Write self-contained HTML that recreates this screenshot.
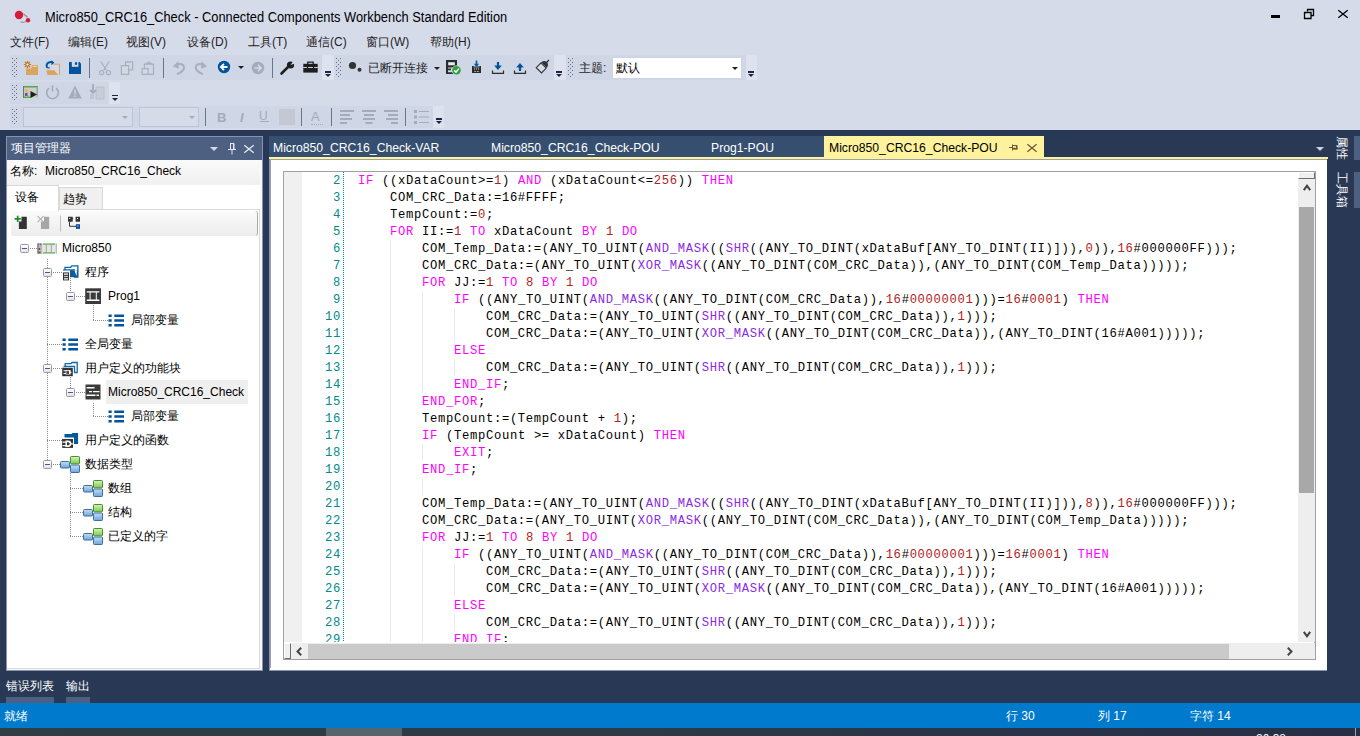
<!DOCTYPE html>
<html><head><meta charset="utf-8">
<style>
*{box-sizing:border-box;margin:0;padding:0}
html,body{width:1360px;height:736px;overflow:hidden;background:#293955;font-family:"Liberation Sans",sans-serif;font-size:12px;color:#1e1e1e}
.a{position:absolute}
.t{position:absolute;white-space:pre;line-height:1}
svg{position:absolute;overflow:visible}
#top{left:0;top:0;width:1360px;height:130px;background:#d6dbe9}
.tb{position:absolute;background:#cfd6e5}
.grip{position:absolute;width:6px}
.sep{position:absolute;width:1px;background:#6b7489}
.ovf{position:absolute;width:7px;height:8px}
.ovf:before{content:"";position:absolute;left:0;top:0;width:6px;height:1.5px;background:#1b2742}
.ovf:after{content:"";position:absolute;left:0;top:3px;border-left:3px solid transparent;border-right:3px solid transparent;border-top:3.5px solid #1b2742}
.dd{position:absolute;border-left:3px solid transparent;border-right:3px solid transparent;border-top:3px solid #1e1e1e;width:0;height:0}
.code{position:absolute;left:358px;top:172px;font-family:"Liberation Mono",monospace;font-size:12.2px;letter-spacing:0.68px;line-height:17px;white-space:pre;color:#000}
.k{color:#ff00ff}.f{color:#8a2be2}.n{color:#b22222}
.ln{position:absolute;left:300px;width:42px;top:172px;text-align:right;font-family:"Liberation Mono",monospace;font-size:12.2px;letter-spacing:0.68px;line-height:17px;color:#008b8b;white-space:pre}
.tree .t{font-size:12px;color:#000}
</style></head><body>
<div id="top" class="a"></div>
<!-- title -->
<svg style="left:12px;top:8px" width="20" height="16" viewBox="0 0 20 16">
<path d="M11.3 5.8L15.6 9.3" stroke="#8c9494" stroke-width="1.3"/><path d="M14.3 13.2Q12.5 15.2 8.6 13.9" fill="none" stroke="#9aa0a0" stroke-width="1.2"/>
<circle cx="7" cy="7" r="4.2" fill="#d7193a"/><circle cx="16" cy="12.2" r="2.2" fill="#d7193a"/></svg>
<div class="t" style="left:45px;top:10px;font-size:14px;color:#000;transform-origin:0 0;transform:scaleX(0.917)">Micro850_CRC16_Check - Connected Components Workbench Standard Edition</div>
<!-- window controls -->
<div class="a" style="left:1271px;top:15px;width:9px;height:3px;background:#000"></div>
<svg style="left:1303px;top:8px" width="12" height="12" viewBox="0 0 12 12" fill="none" stroke="#000" stroke-width="1.3"><path d="M4.5 3.5V1.5h6v6h-2.5"/><path d="M1.5 4.5h6.5v6H1.5z"/></svg>
<svg style="left:1338px;top:10px" width="10" height="8" viewBox="0 0 10 8"><path d="M0.3 0.2L9.7 7.8M9.7 0.2L0.3 7.8" stroke="#000" stroke-width="1.3"/></svg>
<!-- menu -->
<div class="t" style="left:10px;top:36px">文件(F)</div>
<div class="t" style="left:68px;top:36px">编辑(E)</div>
<div class="t" style="left:126px;top:36px">视图(V)</div>
<div class="t" style="left:187px;top:36px">设备(D)</div>
<div class="t" style="left:248px;top:36px">工具(T)</div>
<div class="t" style="left:306px;top:36px">通信(C)</div>
<div class="t" style="left:366px;top:36px">窗口(W)</div>
<div class="t" style="left:430px;top:36px">帮助(H)</div>

<!-- TOOLBARS -->
<div class="tb" style="left:10px;top:55px;width:312px;height:25px"></div>
<svg class="grip" style="left:10px;top:58px" width="8" height="20" fill="#5f6b85"><rect x="2" y="0" width="1" height="1"/><rect x="6" y="0" width="1" height="1"/><rect x="4" y="2" width="1" height="1"/><rect x="2" y="4" width="1" height="1"/><rect x="6" y="4" width="1" height="1"/><rect x="4" y="6" width="1" height="1"/><rect x="2" y="8" width="1" height="1"/><rect x="6" y="8" width="1" height="1"/><rect x="4" y="10" width="1" height="1"/><rect x="2" y="12" width="1" height="1"/><rect x="6" y="12" width="1" height="1"/><rect x="4" y="14" width="1" height="1"/><rect x="2" y="16" width="1" height="1"/><rect x="6" y="16" width="1" height="1"/><rect x="4" y="18" width="1" height="1"/></svg>
<!-- new project / open / save -->
<svg style="left:0;top:0" width="90" height="80" viewBox="0 0 90 80">
<g stroke="#c0761a" stroke-width="1.1" stroke-linecap="round">
<path d="M27.5 61.3v1.2M27.5 66.5v1.2M24.3 64.5h1.2M29.5 64.5h1.2M25.2 62.2l0.8 0.8M29 66l0.8 0.8M29.8 62.2l-0.8 0.8M26 66l-0.8 0.8"/></g>
<circle cx="27.5" cy="64.5" r="1.6" fill="#fff" stroke="#c0761a" stroke-width="1.1"/>
<path d="M26 68.4H31.3L32.1 65H38V75H26Z" fill="#d9a45c"/>
<path d="M32.6 66.3H37.2" stroke="#f3e6cf" stroke-width="0.9"/>
<path d="M50.5 64.2H59.5V75H50.5Z" fill="#d6dae4"/><path d="M53.5 64.2H59.5V75" fill="none" stroke="#d9a45c" stroke-width="1"/>
<path d="M46.2 70.3H54.2L58.3 75H47.6Z" fill="#d9a45c"/>
<path d="M47 67.8Q45.8 64 48.5 62.6Q50.5 61.6 52.5 62.4" fill="none" stroke="#00539c" stroke-width="1.9"/>
<path d="M51.6 60.2L54.4 62.8 51.4 65.2Z" fill="#00539c"/>
<path d="M47 67.5Q48 68.2 49.5 67.6" fill="none" stroke="#00539c" stroke-width="1.3"/>
<path d="M69 62H79.6L81 63.4V74H69Z" fill="#00539c"/>
<path d="M71.8 62H78.4V66.8H71.8Z" fill="#d8dce8"/>
<path d="M74.9 62.2H77.1V64.8H74.9Z" fill="#00539c"/>
</svg>
<div class="sep" style="left:89px;top:58px;height:20px"></div>
<!-- cut/copy/paste/undo/redo -->
<svg style="left:0;top:0" width="215" height="80" viewBox="0 0 215 80">
<g fill="none" stroke="#a9afbb" stroke-width="1.2">
<path d="M101 61.5L106.3 70.2M109 61.5L103.7 70.2"/><circle cx="101.6" cy="72.6" r="2.1"/><circle cx="108.4" cy="72.6" r="2.1"/>
<path d="M125.6 65.2V61.8H132.6V69.8H129.2"/>
<path d="M121.4 65.6H128.6V74.4H121.4Z" fill="#d3d8e3"/>
<path d="M146.5 64.6V63.6H151.2V64.6M144.4 68.2V64.2H153.5V74.4H148.3" />
<path d="M146.8 63.4Q148.9 60.6 151 63.4"/>
<path d="M142.1 68.6H148.1V74.4H142.1Z" fill="#d3d8e3"/>
</g>
<path d="M175.5 65.2Q183.5 62 184 67.5Q184.3 71 177 74.2" fill="none" stroke="#a9afbb" stroke-width="2"/>
<path d="M172.8 66.5L178.2 61.3 178.8 68.8Z" fill="#a9afbb"/>
<path d="M204.3 65.2Q196.3 62 195.8 67.5Q195.5 71 202.8 74.2" fill="none" stroke="#a9afbb" stroke-width="2"/>
<path d="M207 66.5L201.6 61.3 201 68.8Z" fill="#a9afbb"/>
</svg>
<div class="sep" style="left:163px;top:58px;height:20px"></div>
<!-- back -->
<svg style="left:217px;top:60px" width="14" height="14" viewBox="0 0 14 14">
<circle cx="7" cy="7" r="6.2" fill="#00539c"/><path d="M3.5 7h7M7 3.8L3.8 7 7 10.2" fill="none" stroke="#fff" stroke-width="1.8"/></svg>
<div class="dd" style="left:238px;top:66px"></div>
<!-- fwd -->
<svg style="left:251px;top:61px" width="14" height="14" viewBox="0 0 14 14">
<circle cx="7" cy="7" r="6.2" fill="#a5abb8"/><path d="M3.5 7h7M7 3.8L10.2 7 7 10.2" fill="none" stroke="#d6dbe9" stroke-width="1.6"/></svg>
<div class="sep" style="left:272px;top:58px;height:20px"></div>
<!-- wrench -->
<svg style="left:280px;top:61px" width="15" height="14" viewBox="0 0 15 14">
<path d="M1.5 12.5L8 6" stroke="#1e1e1e" stroke-width="2.6" stroke-linecap="round"/><circle cx="10.5" cy="4" r="3.6" fill="#1e1e1e"/><path d="M10.5 4L13 0.5 15 2.5z" fill="#cfd6e5"/></svg>
<!-- toolbox -->
<svg style="left:303px;top:61px" width="15" height="12" viewBox="0 0 15 12">
<path d="M4.8 3V1.2h5.4V3" fill="none" stroke="#1e1e1e" stroke-width="1.3"/><path d="M0.3 2.8h14.4v8.8H0.3z" fill="#1e1e1e"/><path d="M0.3 6h14.4v1H0.3z" fill="#cfd6e5"/><path d="M3.8 5h1.4v2.8H3.8zM9.8 5h1.4v2.8H9.8z" fill="#1e1e1e"/></svg>
<div class="a" style="left:322px;top:55px;width:12px;height:25px;background:#dde2ee"></div>
<div class="ovf" style="left:325px;top:71px"></div>

<div class="tb" style="left:334px;top:55px;width:220px;height:25px"></div>
<svg class="grip" style="left:334px;top:58px" width="8" height="20" fill="#5f6b85"><rect x="2" y="0" width="1" height="1"/><rect x="6" y="0" width="1" height="1"/><rect x="4" y="2" width="1" height="1"/><rect x="2" y="4" width="1" height="1"/><rect x="6" y="4" width="1" height="1"/><rect x="4" y="6" width="1" height="1"/><rect x="2" y="8" width="1" height="1"/><rect x="6" y="8" width="1" height="1"/><rect x="4" y="10" width="1" height="1"/><rect x="2" y="12" width="1" height="1"/><rect x="6" y="12" width="1" height="1"/><rect x="4" y="14" width="1" height="1"/><rect x="2" y="16" width="1" height="1"/><rect x="6" y="16" width="1" height="1"/><rect x="4" y="18" width="1" height="1"/></svg>
<svg style="left:348px;top:61px" width="16" height="14" viewBox="0 0 16 14"><circle cx="4.5" cy="4.5" r="3.6" fill="#333"/><circle cx="11.5" cy="8.8" r="2" fill="#333"/></svg>
<div class="t" style="left:368px;top:62px">已断开连接</div>
<div class="dd" style="left:434px;top:67px"></div>
<!-- check/download/upload/brush icons -->
<svg style="left:0;top:0" width="560" height="80" viewBox="0 0 560 80">
<path d="M446 60H457V67.5H448V74H446Z" fill="#2b2b2b"/>
<path d="M448.2 62.2H454.8V65.3H448.2Z" fill="#e8ebf2"/>
<path d="M446 68.6H451V70.2H446ZM446 72.3H453V74H446Z" fill="#2b2b2b"/>
<circle cx="456.5" cy="70.3" r="4.6" fill="#2e9e3e" stroke="#dfe9df" stroke-width="0.6"/>
<path d="M454.2 70.4L456 72.2 458.9 68.6" fill="none" stroke="#fff" stroke-width="1.5"/>
<path d="M472 66H481V73H472Z" fill="#2b2b2b"/>
<path d="M473.5 66.5H479.5V67.3H473.5Z" fill="#cfd6e5"/>
<path d="M474 68.5h1v1h-1zM476 68.5h1v1h-1zM478 68.5h1v1h-1zM474.5 71h1.2v1h-1.2zM477.3 71h1.2v1h-1.2z" fill="#e6e9f0"/>
<path d="M476.5 60.5V66" stroke="#00609c" stroke-width="1.6"/>
<path d="M473.8 63.8L476.5 67 479.2 63.8Z" fill="#00609c"/>
<path d="M498 62V68.5" stroke="#00539c" stroke-width="2.2"/>
<path d="M494.2 65.5L498 70 501.8 65.5Z" fill="#00539c"/>
<path d="M492.5 70.5V73.3H503.5V70.5" fill="none" stroke="#2b2b2b" stroke-width="1.2"/>
<path d="M520 71V65.5" stroke="#00539c" stroke-width="2.2"/>
<path d="M516.2 67.5L520 63 523.8 67.5Z" fill="#00539c"/>
<path d="M514.5 70.5V73.3H525.5V70.5" fill="none" stroke="#2b2b2b" stroke-width="1.2"/>
<path d="M545.5 63.5L549 60" stroke="#333" stroke-width="1.2"/>
<path d="M541.2 62.3Q544.5 59.8 546.8 62.1Q549.2 64.6 546.8 67.8Z" fill="#333"/>
<path d="M541 62.8L546.3 68.1 541.5 73 536.2 67.7Z" fill="#d6dbe9" stroke="#333" stroke-width="1.1"/>
</svg>
<div class="a" style="left:554px;top:55px;width:12px;height:25px;background:#dde2ee"></div>
<div class="ovf" style="left:556px;top:71px"></div>

<div class="tb" style="left:566px;top:55px;width:180px;height:25px"></div>
<svg class="grip" style="left:566px;top:58px" width="8" height="20" fill="#5f6b85"><rect x="2" y="0" width="1" height="1"/><rect x="6" y="0" width="1" height="1"/><rect x="4" y="2" width="1" height="1"/><rect x="2" y="4" width="1" height="1"/><rect x="6" y="4" width="1" height="1"/><rect x="4" y="6" width="1" height="1"/><rect x="2" y="8" width="1" height="1"/><rect x="6" y="8" width="1" height="1"/><rect x="4" y="10" width="1" height="1"/><rect x="2" y="12" width="1" height="1"/><rect x="6" y="12" width="1" height="1"/><rect x="4" y="14" width="1" height="1"/><rect x="2" y="16" width="1" height="1"/><rect x="6" y="16" width="1" height="1"/><rect x="4" y="18" width="1" height="1"/></svg>
<div class="t" style="left:579px;top:62px">主题:</div>
<div class="a" style="left:612px;top:57px;width:130px;height:22px;background:#fff;border:1px solid #ccd3e3"></div>
<div class="t" style="left:616px;top:62px;color:#000">默认</div>
<div class="dd" style="left:732px;top:67px"></div>
<div class="a" style="left:746px;top:55px;width:11px;height:25px;background:#dde2ee"></div>
<div class="ovf" style="left:748px;top:71px"></div>

<!-- row 2 -->
<div class="tb" style="left:10px;top:82px;width:99px;height:22px"></div>
<div class="a" style="left:109px;top:82px;width:11px;height:22px;background:#dde2ee"></div>
<svg class="grip" style="left:10px;top:85px" width="8" height="16" fill="#5f6b85"><rect x="2" y="0" width="1" height="1"/><rect x="6" y="0" width="1" height="1"/><rect x="4" y="2" width="1" height="1"/><rect x="2" y="4" width="1" height="1"/><rect x="6" y="4" width="1" height="1"/><rect x="4" y="6" width="1" height="1"/><rect x="2" y="8" width="1" height="1"/><rect x="6" y="8" width="1" height="1"/><rect x="4" y="10" width="1" height="1"/><rect x="2" y="12" width="1" height="1"/><rect x="6" y="12" width="1" height="1"/><rect x="4" y="14" width="1" height="1"/></svg>
<svg style="left:23px;top:86px" width="15" height="12" viewBox="0 0 15 12"><path d="M0 0h15v12H0z" fill="#c9d0c8"/><path d="M0 0h15v1.5H0zM0 10.5h8v1.5H0z" fill="#5aa54a"/><path d="M0 0h1v12H0z" fill="#6a7a6a"/><path d="M1.5 3h4v7h-4z" fill="#e8b48a"/><path d="M2 7h2.5v3H2z" fill="#2f6fb0"/><path d="M13.5 1.5h1.5v9h-1.5z" fill="#9aa59a"/><path d="M7.5 5L14 8.5 7.5 12z" fill="#1e1e1e"/></svg>
<svg style="left:45px;top:85px" width="15" height="15" viewBox="0 0 15 15" fill="none" stroke="#a5abb8" stroke-width="1.6">
<path d="M4 3.2A5.8 5.8 0 1 0 11 3.2"/><path d="M7.5 0.5v6"/></svg>
<svg style="left:68px;top:85px" width="14" height="14" viewBox="0 0 14 14">
<path d="M7 0.5L13.8 13.5H0.2z" fill="#a5abb8"/><path d="M6.3 4.5h1.4v5H6.3zM6.3 10.5h1.4v1.5H6.3z" fill="#cfd6e5"/></svg>
<svg style="left:89px;top:84px" width="16" height="16" viewBox="0 0 16 16">
<path d="M7 3h8v12H7z" fill="#c9ced8" stroke="#b8bdc9" stroke-width="0.8"/><path d="M4 0v9M1 6l3 3 3-3" fill="none" stroke="#a5abb8" stroke-width="1.8"/><path d="M1 10h4v5H1z" fill="#c0c5d0"/></svg>
<div class="ovf" style="left:112px;top:94.5px"></div>

<!-- row 3 -->
<div class="tb" style="left:10px;top:106px;width:423px;height:22px"></div>
<div class="a" style="left:433px;top:106px;width:11px;height:22px;background:#dde2ee"></div>
<svg class="grip" style="left:10px;top:109px" width="8" height="16" fill="#5f6b85"><rect x="2" y="0" width="1" height="1"/><rect x="6" y="0" width="1" height="1"/><rect x="4" y="2" width="1" height="1"/><rect x="2" y="4" width="1" height="1"/><rect x="6" y="4" width="1" height="1"/><rect x="4" y="6" width="1" height="1"/><rect x="2" y="8" width="1" height="1"/><rect x="6" y="8" width="1" height="1"/><rect x="4" y="10" width="1" height="1"/><rect x="2" y="12" width="1" height="1"/><rect x="6" y="12" width="1" height="1"/><rect x="4" y="14" width="1" height="1"/></svg>
<div class="a" style="left:23px;top:107px;width:110px;height:20px;border:1px solid #bcc5d8;background:#d6dbe9"></div>
<div class="dd" style="left:122px;top:116px;border-top-color:#a5abb8"></div>
<div class="a" style="left:139px;top:107px;width:60px;height:20px;border:1px solid #bcc5d8;background:#d6dbe9"></div>
<div class="dd" style="left:189px;top:116px;border-top-color:#a5abb8"></div>
<div class="sep" style="left:205px;top:108px;height:18px"></div>
<div class="t" style="left:217px;top:111px;font-weight:bold;font-size:13px;color:#a5abb8">B</div>
<div class="t" style="left:240px;top:111px;font-style:italic;font-weight:bold;font-size:13px;color:#a5abb8">I</div>
<div class="t" style="left:259px;top:110px;font-size:12px;color:#a5abb8">U</div>
<div class="a" style="left:260px;top:121px;width:9px;height:1px;background:#a5abb8"></div>
<div class="a" style="left:279px;top:109px;width:16px;height:16px;background:#c3c8d3"></div>
<div class="sep" style="left:301px;top:108px;height:18px"></div>
<div class="t" style="left:311px;top:110px;font-size:13px;color:#a5abb8">A</div>
<div class="a" style="left:311px;top:124px;width:12px;height:1px;border-top:1px dotted #a5abb8"></div>
<div class="sep" style="left:331px;top:108px;height:18px"></div>
<svg style="left:340px;top:110px" width="15" height="14" viewBox="0 0 15 14" fill="#a5abb8"><path d="M0 0h14v2H0zM0 4h10v2H0zM0 8h12v2H0zM0 12h7v2H0z"/></svg>
<svg style="left:362px;top:110px" width="15" height="14" viewBox="0 0 15 14" fill="#a5abb8"><path d="M0 0h14v2H0zM2 4h10v2H2zM1 8h12v2H1zM3.5 12h7v2h-7z"/></svg>
<svg style="left:384px;top:110px" width="15" height="14" viewBox="0 0 15 14" fill="#a5abb8"><path d="M0 0h14v2H0zM4 4h10v2H4zM2 8h12v2H2zM7 12h7v2H7z"/></svg>
<div class="sep" style="left:405px;top:108px;height:18px"></div>
<svg style="left:414px;top:110px" width="15" height="14" viewBox="0 0 15 14" fill="#a5abb8"><path d="M0 0h3v3H0zM0 5.5h3v3H0zM0 11h3v3H0zM5 1h10v1H5zM5 6.5h10v1H5zM5 12h10v1H5z"/></svg>
<div class="ovf" style="left:436px;top:118px"></div>


<!-- LEFT PANEL -->
<div class="a" style="left:6px;top:136px;width:257px;height:535px;background:#fff;border:1px solid #8592b5"></div>
<div class="a" style="left:7px;top:137px;width:255px;height:23px;background:#4d6082"></div>
<div class="t" style="left:11px;top:142px;color:#fff">项目管理器</div>
<div class="dd" style="left:210px;top:147px;border-width:4px 4px 0 4px;border-top-color:#d5dae5"></div>
<svg style="left:228px;top:143px" width="8" height="12" viewBox="0 0 8 12" fill="none" stroke="#e6e9f0" stroke-width="1"><path d="M2 0.5h4v5.5M2.5 0.5v5.5M5.5 0.5v5.5M0 6.5h8M4 6.5v5"/></svg>
<svg style="left:244px;top:145px" width="10" height="8" viewBox="0 0 10 8"><path d="M0.3 0.2L9.7 7.8M9.7 0.2L0.3 7.8" stroke="#e6e9f0" stroke-width="1.3"/></svg>
<!-- name row -->
<div class="a" style="left:7px;top:160px;width:255px;height:25px;background:linear-gradient(#fafafa,#f0f0f0)"></div>
<div class="t" style="left:10px;top:165px;color:#000">名称:</div>
<div class="t" style="left:45px;top:165px;color:#000">Micro850_CRC16_Check</div>
<!-- tabs -->
<div class="a" style="left:7px;top:209px;width:253px;height:460px;border:1px solid #d9d9d9;border-left:none"></div>
<div class="a" style="left:260px;top:160px;width:2px;height:510px;background:#f8f8f5"></div>
<div class="a" style="left:7px;top:669px;width:255px;height:1px;background:#f8f8f5"></div>
<div class="a" style="left:59px;top:187px;width:44px;height:23px;background:#f0f0f0;border:1px solid #d9d9d9"></div>
<div class="a" style="left:7px;top:185px;width:52px;height:26px;background:#fff;border-top:1px solid #d9d9d9;border-right:1px solid #d9d9d9"></div>
<div class="t" style="left:15px;top:191px;color:#000">设备</div>
<div class="t" style="left:63px;top:193px;color:#000">趋势</div>

<!-- panel toolbar -->
<div class="a" style="left:11px;top:211px;width:247px;height:25px;background:linear-gradient(#fbfbfb,#ececec);border-radius:3px;border-right:1px solid #a8a8a8"></div>
<svg style="left:0;top:200px" width="90" height="40" viewBox="0 200 90 40">
<path d="M21.5 216.8H26.8V228.9H18.9V221.5H21.5Z" fill="#333"/>
<path d="M17.7 215.8V222M14.6 218.9H20.8" stroke="#1f8a1f" stroke-width="1.7"/>
<path d="M44 216.8H49.2V228.9H40.9V221.5H44Z" fill="#a6a6a6"/>
<path d="M37.6 216.2L43.6 222.2M43.6 216.2L37.6 222.2" stroke="#b0b0b0" stroke-width="1.2"/>
<path d="M60 215.5h1v16h-1z" fill="#bdbdbd"/>
<path d="M68 216.8H72.7V221.8H68ZM75.6 216.8H80V221.8H75.6Z" fill="#333"/>
<path d="M69.2 218h1v1h-1zM77 218h1v1h-1z" fill="#fff"/>
<path d="M71 218.6h2.2" stroke="#333" stroke-width="1"/>
<path d="M69.5 221.8V226.3H76" fill="none" stroke="#333" stroke-width="1"/>
<path d="M75.9 224.2H80V228.9H75.9Z" fill="#0b4ea2"/>
<path d="M77.4 225.4h1v1h-1z" fill="#fff"/>
</svg>

<div id="tree"><div class="a" style="left:106px;top:380px;width:142px;height:24px;background:#efefef"></div>
<div class="a" style="left:47.0px;top:259px;width:1px;height:205px;background-image:linear-gradient(#8a8a8a 50%,transparent 50%);background-size:1px 2px"></div>
<div class="a" style="left:70.0px;top:278px;width:1px;height:18px;background-image:linear-gradient(#8a8a8a 50%,transparent 50%);background-size:1px 2px"></div>
<div class="a" style="left:93.0px;top:305px;width:1px;height:15px;background-image:linear-gradient(#8a8a8a 50%,transparent 50%);background-size:1px 2px"></div>
<div class="a" style="left:70.0px;top:377px;width:1px;height:15px;background-image:linear-gradient(#8a8a8a 50%,transparent 50%);background-size:1px 2px"></div>
<div class="a" style="left:93.0px;top:403px;width:1px;height:13px;background-image:linear-gradient(#8a8a8a 50%,transparent 50%);background-size:1px 2px"></div>
<div class="a" style="left:70.0px;top:473px;width:1px;height:63px;background-image:linear-gradient(#8a8a8a 50%,transparent 50%);background-size:1px 2px"></div>
<div class="a" style="left:20.0px;top:243.5px;width:9px;height:9px;border:1px solid #9a9a9a;border-radius:1.5px;background:linear-gradient(#fff,#e4e4e4)"></div>
<div class="a" style="left:22.0px;top:247.5px;width:5px;height:1px;background:#3c5aa6"></div>
<div class="a" style="left:30px;top:248px;width:7px;height:1px;background-image:linear-gradient(90deg,#8a8a8a 50%,transparent 50%);background-size:2px 1px"></div>
<svg style="left:37px;top:243px" width="20" height="11" viewBox="0 0 20 11"><path d="M0 0.2h20v10.6H0z" fill="#e6e6e6"/><path d="M0 0.2h5.2v10.6H0z" fill="#bdbdbd"/><path d="M0.3 0.5h1.6v10H0.3z" fill="#8a8a8a"/><circle cx="1.8" cy="1.3" r="0.8" fill="#3a8ad6"/><circle cx="3.6" cy="1.3" r="0.8" fill="#1e6fc0"/><circle cx="3.6" cy="3" r="0.8" fill="#f0922e"/><circle cx="3.6" cy="6" r="0.8" fill="#f0922e"/><circle cx="2.4" cy="6" r="0.7" fill="#222"/><path d="M1.2 8.5h2.5v2H1.2z" fill="#666"/><path d="M6 0.6h12v1.2H6zM6 9.2h12v1.2H6z" fill="#5fb84a"/><path d="M9.3 1.5v8M14.3 1.5v8" stroke="#9a9a9a" stroke-width="0.9"/><path d="M18.8 0.5h0.9v10h-0.9z" fill="#a8a8a8"/></svg>
<div class="t" style="left:62px;top:241.5px;color:#000">Micro850</div>
<div class="a" style="left:43.0px;top:267.5px;width:9px;height:9px;border:1px solid #9a9a9a;border-radius:1.5px;background:linear-gradient(#fff,#e4e4e4)"></div>
<div class="a" style="left:45.0px;top:271.5px;width:5px;height:1px;background:#3c5aa6"></div>
<div class="a" style="left:53px;top:272px;width:9px;height:1px;background-image:linear-gradient(90deg,#8a8a8a 50%,transparent 50%);background-size:2px 1px"></div>
<svg style="left:62px;top:264px" width="17" height="17" viewBox="0 0 17 17"><path d="M1.1 5.8H12.4V13.2H15.9V1.9H9.7L8.7 3.3H3V5.8" fill="#fff" stroke="#0e64a6" stroke-width="1.3"/><path d="M8 6.2H15.9V13.2H8Z" fill="#0e5c9e"/><path d="M12.4 6.3L14.6 12L15 6.3Z" fill="#fff"/><path d="M1 8.4H7V16.4H1Z" fill="#333"/><path d="M2 9.5H6V10.7H2ZM2 14.3H6V15.5H2Z" fill="#fff"/><path d="M2 11.9H6V13.1H2Z" fill="#c4c4c4"/></svg>
<div class="t" style="left:85px;top:265.5px;color:#000">程序</div>
<div class="a" style="left:66.0px;top:291.5px;width:9px;height:9px;border:1px solid #9a9a9a;border-radius:1.5px;background:linear-gradient(#fff,#e4e4e4)"></div>
<div class="a" style="left:68.0px;top:295.5px;width:5px;height:1px;background:#3c5aa6"></div>
<div class="a" style="left:76px;top:296px;width:9px;height:1px;background-image:linear-gradient(90deg,#8a8a8a 50%,transparent 50%);background-size:2px 1px"></div>
<svg style="left:85px;top:288px" width="16" height="16" viewBox="0 0 16 16"><path d="M0.2 0.3h15.8v15.7H0.2z" fill="#3a3a3a"/><path d="M1.8 3.2h12.6v1.3H1.8zM1.8 11.6h12.6v1.3H1.8z" fill="#fff"/><path d="M4.6 4h1v8H4.6zM10.8 4h1v8h-1z" fill="#fff"/></svg>
<div class="t" style="left:108px;top:289.5px;color:#000">Prog1</div>
<div class="a" style="left:93px;top:320px;width:15px;height:1px;background-image:linear-gradient(90deg,#8a8a8a 50%,transparent 50%);background-size:2px 1px"></div>
<svg style="left:108px;top:313px" width="16" height="15" viewBox="0 0 16 15"><path d="M0.5 1.5h3.2v2.6H0.5zM0.5 6.2h3.2v2.6H0.5zM0.5 10.9h3.2v2.6H0.5zM6.3 1.5H16v2.6H6.3zM6.3 6.2H16v2.6H6.3zM6.3 10.9H16v2.6H6.3z" fill="#00539c"/></svg>
<div class="t" style="left:131px;top:313.5px;color:#000">局部变量</div>
<div class="a" style="left:47px;top:344px;width:15px;height:1px;background-image:linear-gradient(90deg,#8a8a8a 50%,transparent 50%);background-size:2px 1px"></div>
<svg style="left:62px;top:337px" width="16" height="15" viewBox="0 0 16 15"><path d="M0.5 1.5h3.2v2.6H0.5zM0.5 6.2h3.2v2.6H0.5zM0.5 10.9h3.2v2.6H0.5zM6.3 1.5H16v2.6H6.3zM6.3 6.2H16v2.6H6.3zM6.3 10.9H16v2.6H6.3z" fill="#00539c"/></svg>
<div class="t" style="left:85px;top:337.5px;color:#000">全局变量</div>
<div class="a" style="left:43.0px;top:363.5px;width:9px;height:9px;border:1px solid #9a9a9a;border-radius:1.5px;background:linear-gradient(#fff,#e4e4e4)"></div>
<div class="a" style="left:45.0px;top:367.5px;width:5px;height:1px;background:#3c5aa6"></div>
<div class="a" style="left:53px;top:368px;width:9px;height:1px;background-image:linear-gradient(90deg,#8a8a8a 50%,transparent 50%);background-size:2px 1px"></div>
<svg style="left:62px;top:360px" width="17" height="17" viewBox="0 0 17 17"><path d="M1.5 6.3H12.5V12.5H15.2V2.5H10L9 3.7H3.2V6.3" fill="#fff" stroke="#0e6aa8" stroke-width="1.3"/><path d="M0.2 7.7H10.8V16.2H0.2Z" fill="#333"/><path d="M3.7 9.9H8.6V14.5H3.7ZM1.5 10.3H3.7V11.3H1.5ZM1.5 13H3.7V14H1.5ZM8.6 11.8H9.6V12.8H8.6Z" fill="#fff"/><path d="M4.4 10.8H6.9V14H4.4Z" fill="#333"/><path d="M5.6 11v3" stroke="#777" stroke-width="0.5"/></svg>
<div class="t" style="left:85px;top:361.5px;color:#000">用户定义的功能块</div>
<div class="a" style="left:66.0px;top:387.5px;width:9px;height:9px;border:1px solid #9a9a9a;border-radius:1.5px;background:linear-gradient(#fff,#e4e4e4)"></div>
<div class="a" style="left:68.0px;top:391.5px;width:5px;height:1px;background:#3c5aa6"></div>
<div class="a" style="left:76px;top:392px;width:9px;height:1px;background-image:linear-gradient(90deg,#8a8a8a 50%,transparent 50%);background-size:2px 1px"></div>
<svg style="left:85px;top:384px" width="16" height="16" viewBox="0 0 16 16"><path d="M0.5 0.5h15v15h-15z" fill="#3a3a3a"/><path d="M1.5 3h8v1.4h-8zM4 7h3v1.2H4zM8 7h6.5v1.2H8zM1.5 10.6h9v1.4h-9zM11.5 10.6h2.5v1.4h-2.5z" fill="#fff"/></svg>
<div class="t" style="left:108px;top:385.5px;color:#000">Micro850_CRC16_Check</div>
<div class="a" style="left:93px;top:416px;width:15px;height:1px;background-image:linear-gradient(90deg,#8a8a8a 50%,transparent 50%);background-size:2px 1px"></div>
<svg style="left:108px;top:409px" width="16" height="15" viewBox="0 0 16 15"><path d="M0.5 1.5h3.2v2.6H0.5zM0.5 6.2h3.2v2.6H0.5zM0.5 10.9h3.2v2.6H0.5zM6.3 1.5H16v2.6H6.3zM6.3 6.2H16v2.6H6.3zM6.3 10.9H16v2.6H6.3z" fill="#00539c"/></svg>
<div class="t" style="left:131px;top:409.5px;color:#000">局部变量</div>
<div class="a" style="left:47px;top:440px;width:15px;height:1px;background-image:linear-gradient(90deg,#8a8a8a 50%,transparent 50%);background-size:2px 1px"></div>
<svg style="left:62px;top:432px" width="17" height="16" viewBox="0 0 17 16"><path d="M2.5 2H9.6L10.5 1H16.1V11.9H12V5.6H2.5Z" fill="#00599c"/><path d="M0.1 7H11V15.9H0.1Z" fill="#333"/><path d="M0.5 9.6H3.5V10.8H0.5ZM0.5 13H3.5V14.2H0.5ZM3.5 8.6H6.3Q9.3 8.6 9.3 11.8Q9.3 14.9 6.3 14.9H3.5ZM9.2 11.2H10.9V12.4H9.2Z" fill="#fff"/><path d="M5 10.2H6.2Q7.7 10.2 7.7 11.8Q7.7 13.3 6.2 13.3H5Z" fill="#333"/></svg>
<div class="t" style="left:85px;top:433.5px;color:#000">用户定义的函数</div>
<div class="a" style="left:43.0px;top:459.5px;width:9px;height:9px;border:1px solid #9a9a9a;border-radius:1.5px;background:linear-gradient(#fff,#e4e4e4)"></div>
<div class="a" style="left:45.0px;top:463.5px;width:5px;height:1px;background:#3c5aa6"></div>
<div class="a" style="left:53px;top:464px;width:7px;height:1px;background-image:linear-gradient(90deg,#8a8a8a 50%,transparent 50%);background-size:2px 1px"></div>
<svg style="left:60px;top:456px" width="20" height="17" viewBox="0 0 20 17"><defs><linearGradient id="gb" x1="0" y1="0" x2="0" y2="1"><stop offset="0" stop-color="#c4def4"/><stop offset="1" stop-color="#6ea6d6"/></linearGradient><linearGradient id="gg" x1="0" y1="0" x2="0" y2="1"><stop offset="0" stop-color="#d6f5b8"/><stop offset="1" stop-color="#7cc854"/></linearGradient></defs><rect x="0.5" y="5.5" width="9" height="6.5" rx="1" fill="url(#gb)" stroke="#3f6f9a"/><rect x="10.5" y="0.5" width="9" height="7.3" rx="0.8" fill="url(#gg)" stroke="#4d8c2c"/><rect x="10.5" y="9" width="9" height="7.5" rx="0.8" fill="url(#gb)" stroke="#3f6f9a"/></svg>
<div class="t" style="left:85px;top:457.5px;color:#000">数据类型</div>
<div class="a" style="left:70px;top:488px;width:13px;height:1px;background-image:linear-gradient(90deg,#8a8a8a 50%,transparent 50%);background-size:2px 1px"></div>
<svg style="left:83px;top:480px" width="20" height="17" viewBox="0 0 20 17"><defs><linearGradient id="gb" x1="0" y1="0" x2="0" y2="1"><stop offset="0" stop-color="#c4def4"/><stop offset="1" stop-color="#6ea6d6"/></linearGradient><linearGradient id="gg" x1="0" y1="0" x2="0" y2="1"><stop offset="0" stop-color="#d6f5b8"/><stop offset="1" stop-color="#7cc854"/></linearGradient></defs><rect x="0.5" y="5.5" width="9" height="6.5" rx="1" fill="url(#gb)" stroke="#3f6f9a"/><rect x="10.5" y="0.5" width="9" height="7.3" rx="0.8" fill="url(#gg)" stroke="#4d8c2c"/><rect x="10.5" y="9" width="9" height="7.5" rx="0.8" fill="url(#gb)" stroke="#3f6f9a"/></svg>
<div class="t" style="left:108px;top:481.5px;color:#000">数组</div>
<div class="a" style="left:70px;top:512px;width:13px;height:1px;background-image:linear-gradient(90deg,#8a8a8a 50%,transparent 50%);background-size:2px 1px"></div>
<svg style="left:83px;top:504px" width="20" height="17" viewBox="0 0 20 17"><defs><linearGradient id="gb" x1="0" y1="0" x2="0" y2="1"><stop offset="0" stop-color="#c4def4"/><stop offset="1" stop-color="#6ea6d6"/></linearGradient><linearGradient id="gg" x1="0" y1="0" x2="0" y2="1"><stop offset="0" stop-color="#d6f5b8"/><stop offset="1" stop-color="#7cc854"/></linearGradient></defs><rect x="0.5" y="5.5" width="9" height="6.5" rx="1" fill="url(#gb)" stroke="#3f6f9a"/><rect x="10.5" y="0.5" width="9" height="7.3" rx="0.8" fill="url(#gg)" stroke="#4d8c2c"/><rect x="10.5" y="9" width="9" height="7.5" rx="0.8" fill="url(#gb)" stroke="#3f6f9a"/></svg>
<div class="t" style="left:108px;top:505.5px;color:#000">结构</div>
<div class="a" style="left:70px;top:536px;width:13px;height:1px;background-image:linear-gradient(90deg,#8a8a8a 50%,transparent 50%);background-size:2px 1px"></div>
<svg style="left:83px;top:528px" width="20" height="17" viewBox="0 0 20 17"><defs><linearGradient id="gb" x1="0" y1="0" x2="0" y2="1"><stop offset="0" stop-color="#c4def4"/><stop offset="1" stop-color="#6ea6d6"/></linearGradient><linearGradient id="gg" x1="0" y1="0" x2="0" y2="1"><stop offset="0" stop-color="#d6f5b8"/><stop offset="1" stop-color="#7cc854"/></linearGradient></defs><rect x="0.5" y="5.5" width="9" height="6.5" rx="1" fill="url(#gb)" stroke="#3f6f9a"/><rect x="10.5" y="0.5" width="9" height="7.3" rx="0.8" fill="url(#gg)" stroke="#4d8c2c"/><rect x="10.5" y="9" width="9" height="7.5" rx="0.8" fill="url(#gb)" stroke="#3f6f9a"/></svg>
<div class="t" style="left:108px;top:529.5px;color:#000">已定义的字</div></div><!--/tree-->

<!-- EDITOR -->
<div id="editor"><div class="a" style="left:269px;top:136px;width:555px;height:23px;background:#364e6f"></div>
<div class="a" style="left:269px;top:157px;width:1059px;height:2px;background:#fff29d"></div>
<div class="a" style="left:824px;top:136px;width:220px;height:23px;background:#fff29d"></div>
<div class="t" style="left:273px;top:142px;color:#fff;font-size:12.2px">Micro850_CRC16_Check-VAR</div>
<div class="t" style="left:491px;top:142px;color:#fff;font-size:12.2px">Micro850_CRC16_Check-POU</div>
<div class="t" style="left:711px;top:142px;color:#fff;font-size:12.2px">Prog1-POU</div>
<div class="t" style="left:829px;top:142px;color:#000;font-size:12.2px">Micro850_CRC16_Check-POU</div>
<svg style="left:1009px;top:144px" width="9" height="8" viewBox="0 0 9 8"><path d="M0 3.5h3.5M3.5 0.5v6" fill="none" stroke="#6b5b3a" stroke-width="1"/><path d="M4 1.5h3.5v3.5H4" fill="none" stroke="#6b5b3a" stroke-width="1"/><path d="M4 4.5h4.5" stroke="#6b5b3a" stroke-width="1.5"/><path d="M7.8 1v4.5" stroke="#6b5b3a" stroke-width="1.3"/></svg>
<svg style="left:1027px;top:144px" width="10" height="8" viewBox="0 0 10 8"><path d="M0.4 0.3L9.6 7.7M9.6 0.3L0.4 7.7" stroke="#6b5b3a" stroke-width="1.3"/></svg>
<div class="dd" style="left:1316px;top:147px;border-width:4px 4px 0 4px;border-top-color:#cdd3e0"></div>
<div class="a" style="left:269px;top:159px;width:1058px;height:512px;background:#fff;border-left:1px solid #8592b5;border-bottom:1px solid #8592b5"></div>
<div class="a" style="left:270px;top:159px;width:1px;height:509px;background:#a0a0a0"></div>
<div class="a" style="left:270px;top:159px;width:1057px;height:1px;background:#a0a0a0"></div>
<div class="a" style="left:283px;top:171px;width:1033px;height:489px;border:1px solid #a0a0a0;border-right:2px solid #a0a0a0;border-bottom:2px solid #a0a0a0;background:#fff"></div>
<div class="a" style="left:284px;top:172px;width:18px;height:470px;background:#f0f0f0"></div>
<div class="a" style="left:343px;top:172px;width:1px;height:470px;background-image:linear-gradient(#008b8b 50%,transparent 50%);background-size:1px 2px"></div>
<div class="a" style="left:390px;top:240px;width:1px;height:402px;background:#ebebeb"></div>
<div class="a" style="left:422px;top:478px;width:1px;height:17px;background:#ebebeb"></div>
<div class="a" style="left:422px;top:291px;width:1px;height:102px;background:#ebebeb"></div>
<div class="a" style="left:454px;top:308px;width:1px;height:34px;background:#ebebeb"></div>
<div class="a" style="left:454px;top:359px;width:1px;height:17px;background:#ebebeb"></div>
<div class="a" style="left:422px;top:444px;width:1px;height:17px;background:#ebebeb"></div>
<div class="a" style="left:422px;top:546px;width:1px;height:96px;background:#ebebeb"></div>
<div class="a" style="left:454px;top:563px;width:1px;height:34px;background:#ebebeb"></div>
<div class="a" style="left:454px;top:614px;width:1px;height:17px;background:#ebebeb"></div>
<div class="a" style="left:284px;top:172px;width:1014px;height:470px;overflow:hidden">
<div class="ln" style="left:0;top:1px;width:57px">2
3
4
5
6
7
8
9
10
11
12
13
14
15
16
17
18
19
20
21
22
23
24
25
26
27
28
29</div>
<div class="code" style="left:74px;top:1px"><span class="k">IF</span> ((xDataCount&gt;=<span class="n">1</span>) <span class="k">AND</span> (xDataCount&lt;=<span class="n">256</span>)) <span class="k">THEN</span>
    COM_CRC_Data:=16#FFFF;
    TempCount:=<span class="n">0</span>;
    <span class="k">FOR</span> II:=<span class="n">1</span> <span class="k">TO</span> xDataCount <span class="k">BY</span> <span class="n">1</span> <span class="k">DO</span>
        COM_Temp_Data:=(ANY_TO_UINT(<span class="f">AND_MASK</span>((<span class="f">SHR</span>((ANY_TO_DINT(xDataBuf[ANY_TO_DINT(II)])),<span class="n">0</span>)),<span class="n">16</span>#000000FF)));
        COM_CRC_Data:=(ANY_TO_UINT(<span class="f">XOR_MASK</span>((ANY_TO_DINT(COM_CRC_Data)),(ANY_TO_DINT(COM_Temp_Data)))));
        <span class="k">FOR</span> JJ:=<span class="n">1</span> <span class="k">TO</span> <span class="n">8</span> <span class="k">BY</span> <span class="n">1</span> <span class="k">DO</span>
            <span class="k">IF</span> ((ANY_TO_UINT(<span class="f">AND_MASK</span>((ANY_TO_DINT(COM_CRC_Data)),<span class="n">16</span>#<span class="n">00000001</span>)))=<span class="n">16</span>#<span class="n">0001</span>) <span class="k">THEN</span>
                COM_CRC_Data:=(ANY_TO_UINT(<span class="f">SHR</span>((ANY_TO_DINT(COM_CRC_Data)),<span class="n">1</span>)));
                COM_CRC_Data:=(ANY_TO_UINT(<span class="f">XOR_MASK</span>((ANY_TO_DINT(COM_CRC_Data)),(ANY_TO_DINT(16#A001)))));
            <span class="k">ELSE</span>
                COM_CRC_Data:=(ANY_TO_UINT(<span class="f">SHR</span>((ANY_TO_DINT(COM_CRC_Data)),<span class="n">1</span>)));
            <span class="k">END_IF</span>;
        <span class="k">END_FOR</span>;
        TempCount:=(TempCount + <span class="n">1</span>);
        <span class="k">IF</span> (TempCount &gt;= xDataCount) <span class="k">THEN</span>
            <span class="k">EXIT</span>;
        <span class="k">END_IF</span>;

        COM_Temp_Data:=(ANY_TO_UINT(<span class="f">AND_MASK</span>((<span class="f">SHR</span>((ANY_TO_DINT(xDataBuf[ANY_TO_DINT(II)])),<span class="n">8</span>)),<span class="n">16</span>#000000FF)));
        COM_CRC_Data:=(ANY_TO_UINT(<span class="f">XOR_MASK</span>((ANY_TO_DINT(COM_CRC_Data)),(ANY_TO_DINT(COM_Temp_Data)))));
        <span class="k">FOR</span> JJ:=<span class="n">1</span> <span class="k">TO</span> <span class="n">8</span> <span class="k">BY</span> <span class="n">1</span> <span class="k">DO</span>
            <span class="k">IF</span> ((ANY_TO_UINT(<span class="f">AND_MASK</span>((ANY_TO_DINT(COM_CRC_Data)),<span class="n">16</span>#<span class="n">00000001</span>)))=<span class="n">16</span>#<span class="n">0001</span>) <span class="k">THEN</span>
                COM_CRC_Data:=(ANY_TO_UINT(<span class="f">SHR</span>((ANY_TO_DINT(COM_CRC_Data)),<span class="n">1</span>)));
                COM_CRC_Data:=(ANY_TO_UINT(<span class="f">XOR_MASK</span>((ANY_TO_DINT(COM_CRC_Data)),(ANY_TO_DINT(16#A001)))));
            <span class="k">ELSE</span>
                COM_CRC_Data:=(ANY_TO_UINT(<span class="f">SHR</span>((ANY_TO_DINT(COM_CRC_Data)),<span class="n">1</span>)));
            <span class="k">END_IF</span>;</div>
</div>
<div class="a" style="left:1298px;top:172px;width:17px;height:470px;background:#eeeeee"></div>
<div class="a" style="left:1298px;top:172px;width:17px;height:7px;background:#efefef;border:1px solid #6e6e6e;border-top-color:#fff;border-left-color:#fff"></div>
<svg style="left:1303px;top:184px" width="8" height="7" viewBox="0 0 8 7"><path d="M0.8 6.2L4 1.8 7.2 6.2" fill="none" stroke="#454545" stroke-width="2"/></svg>
<div class="a" style="left:1299px;top:207px;width:15px;height:286px;background:#a8a8a8"></div>
<svg style="left:1303px;top:631px" width="8" height="7" viewBox="0 0 8 7"><path d="M0.8 0.8L4 5.2 7.2 0.8" fill="none" stroke="#454545" stroke-width="2"/></svg>
<div class="a" style="left:284px;top:643px;width:1031px;height:16px;background:#eeeeee"></div>
<div class="a" style="left:284px;top:643px;width:7px;height:16px;background:#efefef;border:1px solid #6e6e6e;border-top-color:#fff;border-left-color:#fff"></div>
<svg style="left:296px;top:647px" width="6" height="9" viewBox="0 0 6 9"><path d="M5.2 0.8L1.5 4.5 5.2 8.2" fill="none" stroke="#454545" stroke-width="2"/></svg>
<div class="a" style="left:308px;top:644px;width:921px;height:15px;background:#cacaca"></div>
<svg style="left:1287px;top:647px" width="6" height="9" viewBox="0 0 6 9"><path d="M0.8 0.8L4.5 4.5 0.8 8.2" fill="none" stroke="#454545" stroke-width="2"/></svg>
<div class="t" style="left:1334px;top:135.5px;color:#fff;transform-origin:0 0;transform:translateX(14px) rotate(90deg)">属性</div>
<div class="a" style="left:1354px;top:136px;width:6px;height:24px;background:#4d6082"></div>
<div class="t" style="left:1334px;top:172px;color:#fff;transform-origin:0 0;transform:translateX(14px) rotate(90deg)">工具箱</div>
<div class="a" style="left:1354px;top:172px;width:6px;height:36px;background:#4d6082"></div></div><!--/editor-->

<!-- BOTTOM -->
<div id="bottom"><div class="t" style="left:6px;top:680px;color:#fff">错误列表</div>
<div class="t" style="left:66px;top:680px;color:#fff">输出</div>
<div class="a" style="left:6px;top:697px;width:48px;height:6px;background:#4d6082"></div>
<div class="a" style="left:66px;top:697px;width:24px;height:6px;background:#4d6082"></div>
<div class="a" style="left:0;top:703px;width:1360px;height:25px;background:#007acc"></div>
<div class="t" style="left:4px;top:710px;color:#fff">就绪</div>
<div class="t" style="left:1006px;top:710px;color:#fff">行 30</div>
<div class="t" style="left:1098px;top:710px;color:#fff">列 17</div>
<div class="t" style="left:1190px;top:710px;color:#fff">字符 14</div>
<div class="a" style="left:0;top:728px;width:1360px;height:8px;background:linear-gradient(90deg,#2e3e44 0%,#2c3b44 45%,#28334a 80%,#262f46 100%)"></div>
<div class="t" style="left:1256px;top:733px;color:#fff;font-size:12px">20:38</div>
<div class="a" style="left:326px;top:728px;width:76px;height:8px;background:#56646b"></div>
<div class="a" style="left:1355px;top:728px;width:1px;height:8px;background:#9aa4a8"></div>
</div><!--/bottom-->
</body></html>
